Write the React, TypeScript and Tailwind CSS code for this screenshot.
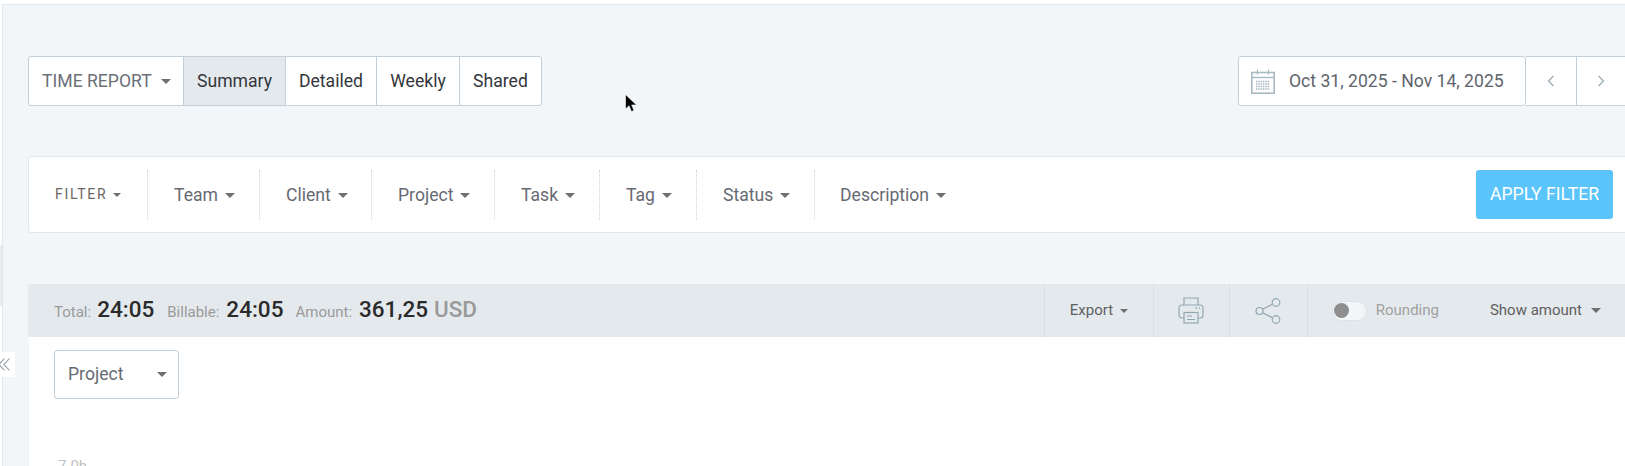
import React from 'react';

const Caret = ({ w = 10, color = '#6f6f6f' }: { w?: number; color?: string }) => (
  <svg width={w} height={Math.round(w / 2)} viewBox="0 0 10 5" className="shrink-0">
    <polygon points="0,0 10,0 5,5" fill={color} />
  </svg>
);

const CalendarIcon = () => (
  <svg width="24" height="25" viewBox="0 0 24 25" fill="none" stroke="#a9b9c2" className="shrink-0">
    <rect x="0.800" y="3.500" width="22.400" height="20.700" strokeWidth="1.600" />
    <path d="M1 8.500h22" strokeWidth="1.400" />
    <path d="M6.500 0.500v5M17.500 0.500v5" strokeWidth="1.200" />
    <path d="M5 12.500h14M5 15h14M5 17.500h14M5 20h14" strokeWidth="1.400" strokeDasharray="1.500 0.800" />
  </svg>
);

const PrinterIcon = () => (
  <svg width="26" height="27" viewBox="0 0 26 27" fill="none" stroke="#93a7b2" strokeWidth="1.200">
    <path d="M6 8V1h14v7" />
    <path d="M6 21H4a3 3 0 0 1-3-3v-7a3 3 0 0 1 3-3h18a3 3 0 0 1 3 3v7a3 3 0 0 1-3 3h-2" />
    <rect x="6" y="15.500" width="14" height="10.500" />
    <path d="M9 19h5M9 22.500h8" />
    <path d="M17.500 11h1.500M21 11h1" strokeWidth="1.500" />
  </svg>
);

const ShareIcon = () => (
  <svg width="26" height="26" viewBox="0 0 26 26" fill="none" stroke="#93a7b2" strokeWidth="1.200">
    <circle cx="4.500" cy="13" r="3.500" />
    <circle cx="21" cy="4.500" r="3.800" />
    <circle cx="21" cy="21.500" r="3.800" />
    <path d="M7.500 11.200 17.700 6.200M7.500 14.800 17.700 19.800" />
  </svg>
);

const filters = [
  { label: 'Team', width: 'w-[112px]' },
  { label: 'Client', width: 'w-[112px]' },
  { label: 'Project', width: 'w-[123px]' },
  { label: 'Task', width: 'w-[105px]' },
  { label: 'Tag', width: 'w-[97px]' },
  { label: 'Status', width: 'w-[118px]' },
];

export default function App() {
  return (
    <div className="relative flex h-[466px] w-full overflow-hidden bg-white font-['Roboto',sans-serif]">
      <div className="w-[2px] shrink-0" />

      <div className="mt-[4px] min-w-0 flex-1 border-t border-l border-[#e2e8ee] bg-[#f2f6f9]">
        {/* Top row */}
        <div className="mt-[51px] ml-[25px] flex h-[50px] items-stretch">
          <div className="flex overflow-hidden rounded-[3px] border border-[#c3d0d9] bg-white text-[17.6px] text-[#33363b]">
            <div className="flex w-[154px] items-center gap-[9px] pl-[13px] text-[#6b6f78]">
              TIME REPORT
              <Caret />
            </div>
            <div className="flex w-[103px] items-center justify-center border-x border-[#c3d0d9] bg-[#e4e9ed]">Summary</div>
            <div className="flex w-[90px] items-center justify-center">Detailed</div>
            <div className="flex w-[83px] items-center justify-center border-l border-[#c3d0d9]">Weekly</div>
            <div className="flex w-[82px] items-center justify-center border-l border-[#c3d0d9]">Shared</div>
          </div>

          <div className="ml-auto flex">
            <div className="flex w-[288px] items-center gap-[14px] rounded-[3px] border border-[#c3d0d9] bg-white pl-[12px] text-[17.6px] text-[#60646c]">
              <CalendarIcon />
              <span>Oct 31, 2025 - Nov 14, 2025</span>
            </div>
            <div className="flex w-[51px] items-center justify-center border-y border-r border-[#c3d0d9] bg-white text-[#9aabb5]">
              <svg width="8" height="12" viewBox="0 0 8 12" fill="none" stroke="currentColor" strokeWidth="1.200">
                <path d="M6.500 1 1.500 6l5 5" />
              </svg>
            </div>
            <div className="flex w-[48px] items-center justify-center border-y border-[#c3d0d9] bg-white text-[#9aabb5]">
              <svg width="8" height="12" viewBox="0 0 8 12" fill="none" stroke="currentColor" strokeWidth="1.200">
                <path d="M1.500 1l5 5-5 5" />
              </svg>
            </div>
          </div>
        </div>

        {/* Filter bar */}
        <div className="mt-[50px] ml-[25px] flex h-[77px] items-center rounded-l-[3px] border-y border-l border-[#e2e8ee] bg-white text-[17.6px] text-[#666a72]">
          <div className="flex h-[50px] w-[118px] items-center gap-[6px] pl-[26px] text-[14px] tracking-[1.7px] text-[#6b6662]">
            FILTER
            <Caret w={8} />
          </div>
          {filters.map((f) => (
            <div key={f.label} className={`flex h-[50px] ${f.width} items-center gap-[7px] border-l border-dotted border-[#d0d4d7] pt-[2px] pl-[26px]`}>
              {f.label}
              <Caret />
            </div>
          ))}
          <div className="flex h-[50px] items-center gap-[7px] border-l border-dotted border-[#d0d4d7] pt-[2px] pl-[25px]">
            Description
            <Caret />
          </div>
          <button className="mr-[12px] ml-auto h-[49px] w-[137px] rounded-[3px] bg-[#5bc5fb] text-[17.6px] text-white">APPLY FILTER</button>
        </div>

        {/* Totals bar */}
        <div className="mt-[51px] ml-[25px] flex h-[53px] items-center rounded-tl-[3px] bg-[#e4e9ed]">
          <div className="mb-[2px] flex items-baseline pl-[26px] text-[15px] text-[#9a9a9a]">
            <span>Total:</span>
            <span className="ml-[6px] text-[22.5px] font-medium text-[#2b2b2b]">24:05</span>
            <span className="ml-[13px]">Billable:</span>
            <span className="ml-[7px] text-[22.5px] font-medium text-[#2b2b2b]">24:05</span>
            <span className="ml-[12px]">Amount:</span>
            <span className="ml-[7px] text-[22.5px] font-medium text-[#2b2b2b]">361,25</span>
            <span className="ml-[6px] text-[22.5px] font-medium">USD</span>
          </div>

          <div className="ml-auto flex h-full items-stretch">
            <div className="flex w-[109px] items-center gap-[7px] border-l border-dotted border-[#cfd3d6] pl-[25px] text-[15px] text-[#5f5f5f]">
              Export
              <Caret w={8} />
            </div>
            <div className="flex w-[76px] items-center justify-center border-l border-dotted border-[#cfd3d6]">
              <PrinterIcon />
            </div>
            <div className="flex w-[78px] items-center justify-center border-l border-dotted border-[#cfd3d6]">
              <ShareIcon />
            </div>
            <div className="flex items-center border-l border-dotted border-[#cfd3d6] pl-[24px]">
              <div className="flex h-[20px] w-[35px] items-center rounded-full border border-[#dce2e7] bg-[#f2f6f9] pl-[1px]">
                <div className="h-[15px] w-[15px] rounded-full bg-[#8e8e8e]" />
              </div>
              <span className="ml-[9px] text-[15px] text-[#a0a0a0]">Rounding</span>
            </div>
            <div className="ml-[51px] flex items-center gap-[9px] pr-[24px] text-[15px] text-[#5f5f5f]">
              Show amount
              <Caret />
            </div>
          </div>
        </div>

        {/* Chart panel */}
        <div className="ml-[26px] h-[140px] bg-white pt-[13px] pl-[25px]">
          <div className="flex h-[49px] w-[125px] items-center justify-between rounded-[3px] border border-[#c3d0d9] pr-[11px] pl-[13px] text-[17.6px] text-[#666a72]">
            Project
            <Caret />
          </div>
          <div className="mt-[56px] pl-[4px] text-[15px] text-[#c2c2c2]">7.0h</div>
        </div>
      </div>

      {/* Collapse tab */}
      <div className="absolute top-[352px] left-0 h-[25px] w-[15px] bg-white py-[6px] text-[#8e9ba3]">
        <svg width="10" height="13" viewBox="0 0 10 13" fill="none" stroke="currentColor" strokeWidth="1.100">
          <path d="M4.500 0.500-1 6.500l5.500 6M9.500 0.500 4 6.500l5.500 6" />
        </svg>
      </div>
      <div className="absolute top-[245px] left-0 h-[61px] w-[2px] bg-[#e8ecef]" />

      {/* Mouse pointer */}
      <svg className="absolute top-[94px] left-[625px]" width="13" height="19" viewBox="0 0 13 19">
        <path d="M0.500 0.500V15L4 11.700 6.500 17.500 9 16.500 6.700 11H11.500Z" fill="#000" stroke="#fff" strokeWidth="0.600" />
      </svg>
    </div>
  );
}
